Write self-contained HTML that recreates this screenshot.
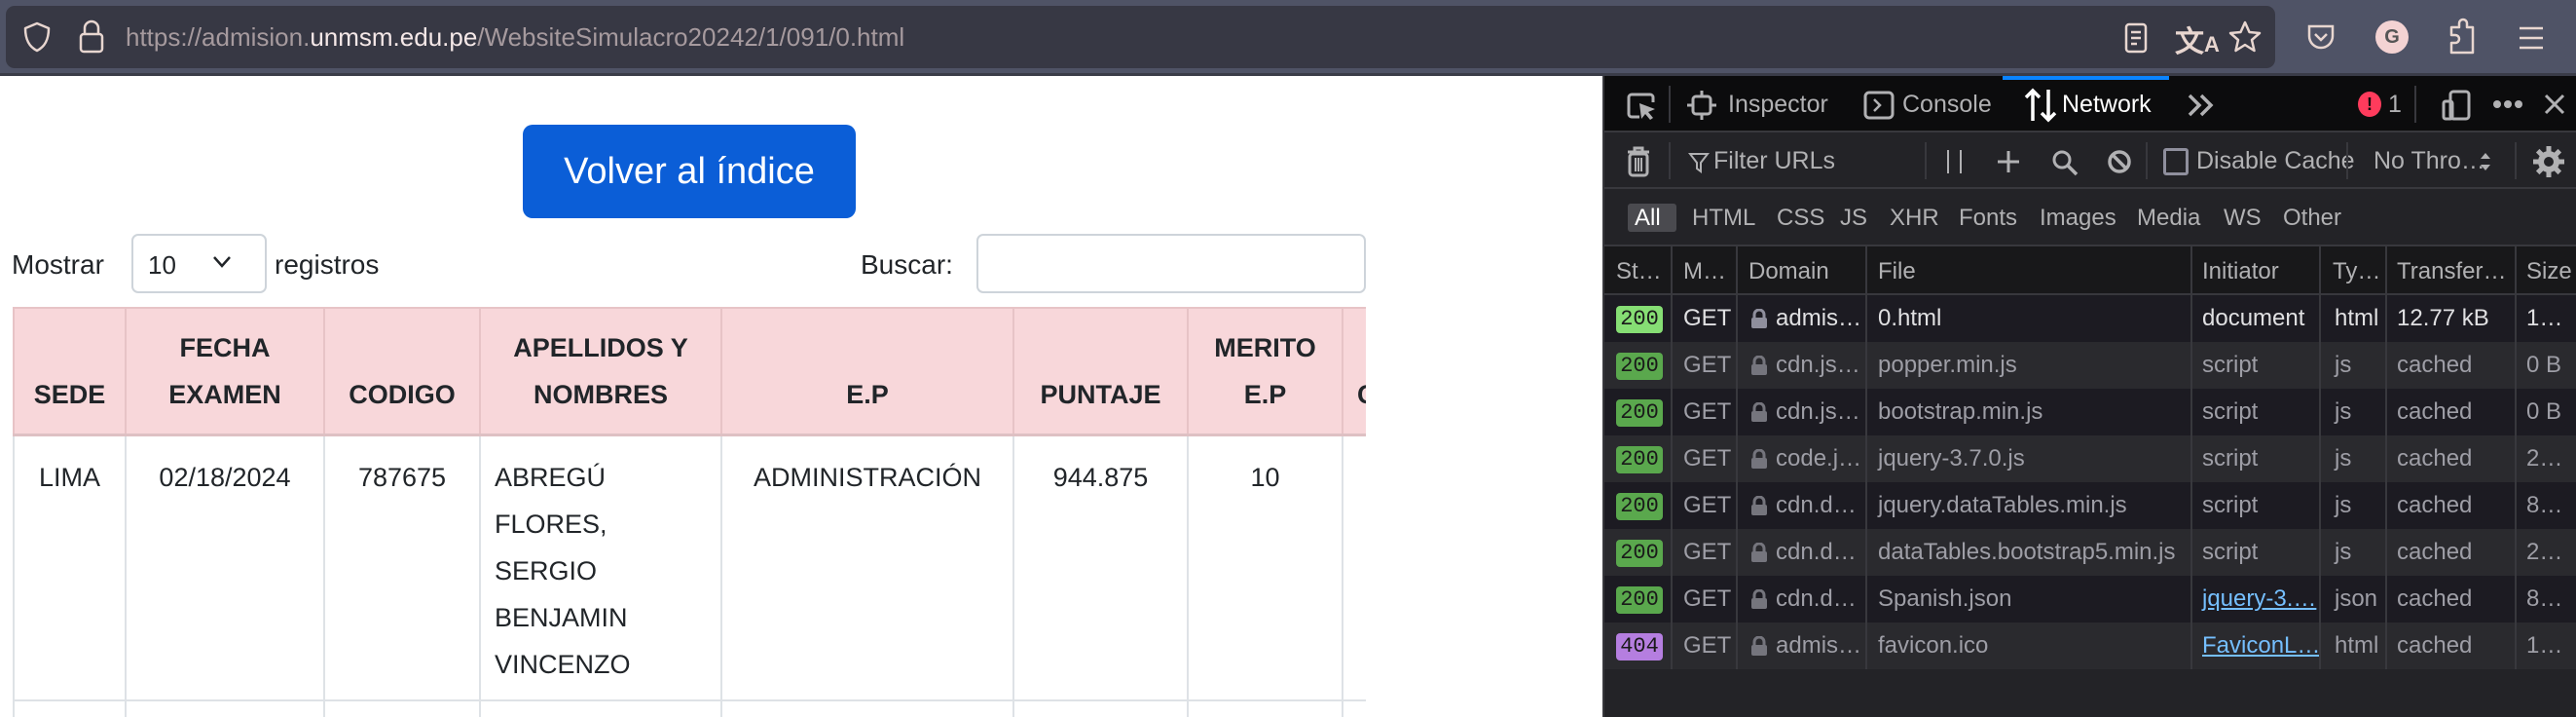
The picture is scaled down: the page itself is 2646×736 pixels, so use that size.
<!DOCTYPE html>
<html><head><meta charset="utf-8"><style>
*{margin:0;padding:0;box-sizing:border-box}
html,body{overflow:hidden}
body{width:2646px;height:736px;position:relative;background:#fff;font-family:"Liberation Sans",sans-serif}
.a{position:absolute;white-space:nowrap}
#top{left:0;top:0;width:2646px;height:78px;background:#4f5366;border-bottom:3px solid #3a3c48}
#url{left:6px;top:6px;width:2331px;height:64px;background:#373844;border-radius:9px}
.ut{font-size:26px;line-height:64px;color:#a69a9e}
.page{left:0;top:78px;width:1646px;height:658px;background:#fff}
.btn{left:537px;top:128px;width:342px;height:96px;background:#0b5ed7;border-radius:10px;color:#fff;font-size:38px;line-height:96px;text-align:center}
.lab{font-size:28px;color:#212529;line-height:32px}
.box{border:2px solid #ced4da;border-radius:7px;background:#fff}
table{position:absolute;left:0;top:0;border-collapse:collapse;font-size:27px;color:#212529;table-layout:fixed;width:1600px}
th,td{border:2px solid #dee2e6;padding:0 10px;overflow:hidden}
th{background:#f8d7da;border-color:#e7c3c6;height:130px;vertical-align:bottom;padding-bottom:16px;line-height:48px;font-weight:bold;text-align:center;border-bottom:3px solid #dec0c3}
td{vertical-align:top;line-height:48px;padding-top:18px;height:273px;text-align:center}
#dt{left:1646px;top:78px;width:1000px;height:658px;background:#232327;border-left:2px solid #38383d;color:#b1b1b3;font-size:23px;overflow:hidden}
.r1{left:0;top:0;width:1000px;height:58px;background:#0c0c0d;border-bottom:2px solid #38383d}
.r2{left:0;top:58px;width:1000px;height:58px;background:#232327;border-bottom:2px solid #38383d}
.r3{left:0;top:116px;width:1000px;height:59px;background:#232327;border-bottom:2px solid #38383d}
.hd{left:0;top:175px;width:1000px;height:50px;background:#18181a;border-bottom:2px solid #38383d}
.sep{position:absolute;width:2px;background:#38383d}
.row{position:absolute;left:0;width:1000px;height:48px}
.cell{position:absolute;line-height:48px;top:0;font-size:24px}
.bdg{position:absolute;left:12px;top:11px;width:48px;height:28px;border-radius:4px;font-family:"Liberation Mono",monospace;font-size:22px;line-height:28px;text-align:center;color:#1a1a1a}
.lk{position:absolute;left:150px;top:14px;width:18px;height:20px}
.lnk{color:#75bfff;text-decoration:underline}
.t{font-size:25px}
</style></head><body>
<div id="top" class="a"></div>
<div id="url" class="a"></div>
<svg class="a" style="left:22px;top:21px" width="32" height="34" viewBox="0 0 32 34"><path d="M16 3 L28 8 C28 20 24 27 16 31 C8 27 4 20 4 8 Z" fill="none" stroke="#e8d6d0" stroke-width="2.5" stroke-linejoin="round"/></svg>
<svg class="a" style="left:80px;top:20px" width="28" height="36" viewBox="0 0 28 36"><path d="M7 15 V9 a7 7 0 0 1 14 0 V15" fill="none" stroke="#e8d6d0" stroke-width="2.5"/><rect x="3" y="15" width="22" height="18" rx="3" fill="none" stroke="#e8d6d0" stroke-width="2.5"/></svg>
<div class="a ut" style="left:129px;top:6px">https://admision.<span style="color:#f5e8e8">unmsm.edu.pe</span>/WebsiteSimulacro20242/1/091/0.html</div>
<svg class="a" style="left:2180px;top:22px" width="28" height="34" viewBox="0 0 28 34"><rect x="4" y="3" width="20" height="28" rx="3" fill="none" stroke="#e8d6d0" stroke-width="2.5"/><path d="M9 11h10M9 17h10M9 23h6" stroke="#e8d6d0" stroke-width="2.5"/></svg>
<div class="a" style="left:2234px;top:18px;font-size:30px;color:#e8d6d0;font-weight:bold">文<span style="font-size:22px">A</span></div>
<svg class="a" style="left:2288px;top:20px" width="36" height="36" viewBox="0 0 36 36"><path d="M18 3 L22.5 13 L33 14 L25 21 L27.5 32 L18 26 L8.5 32 L11 21 L3 14 L13.5 13 Z" fill="none" stroke="#e8d6d0" stroke-width="2.5" stroke-linejoin="round"/></svg>
<svg class="a" style="left:2368px;top:22px" width="32" height="32" viewBox="0 0 32 32"><path d="M4 5 H28 V15 A12 12 0 0 1 4 15 Z" fill="none" stroke="#e8d6d0" stroke-width="2.5"/><path d="M10 13 L16 19 L22 13" fill="none" stroke="#e8d6d0" stroke-width="2.5"/></svg>
<div class="a" style="left:2440px;top:21px;width:34px;height:34px;border-radius:50%;background:#f4d3d3;color:#555;font-weight:bold;font-size:20px;text-align:center;line-height:34px">G</div>
<svg class="a" style="left:2512px;top:18px" width="34" height="40" viewBox="0 0 34 40"><path d="M6 36 V26 h4 a4 4 0 0 0 0-8 H6 V10 h8 V6 a4 4 0 0 1 8 0 V10 h6 V36 Z" fill="none" stroke="#e8d6d0" stroke-width="2.5" stroke-linejoin="round"/></svg>
<svg class="a" style="left:2586px;top:26px" width="28" height="26"><path d="M2 3h24M2 13h24M2 23h24" stroke="#e8d6d0" stroke-width="2.5"/></svg>

<div class="a page"></div>
<div class="a btn">Volver al índice</div>
<div class="a lab" style="left:12px;top:256px">Mostrar</div>
<div class="a box" style="left:135px;top:240px;width:139px;height:61px"></div>
<div class="a lab" style="left:152px;top:256px;font-size:26px">10</div>
<svg class="a" style="left:218px;top:262px" width="20" height="14"><path d="M2 2 L10 11 L18 2" fill="none" stroke="#212529" stroke-width="2.5"/></svg>
<div class="a lab" style="left:282px;top:256px">registros</div>
<div class="a lab" style="left:884px;top:256px">Buscar:</div>
<div class="a box" style="left:1003px;top:240px;width:400px;height:61px"></div>
<div class="a" style="left:13px;top:315px;width:1390px;height:421px;overflow:hidden">
<table>
<colgroup><col style="width:115px"><col style="width:204px"><col style="width:160px"><col style="width:248px"><col style="width:300px"><col style="width:179px"><col style="width:159px"><col style="width:235px"></colgroup>
<tr><th>SEDE</th><th>FECHA<br>EXAMEN</th><th>CODIGO</th><th>APELLIDOS Y<br>NOMBRES</th><th>E.P</th><th>PUNTAJE</th><th>MERITO<br>E.P</th><th style="text-align:left;padding-left:14px">CARRERA</th></tr>
<tr><td>LIMA</td><td>02/18/2024</td><td>787675</td><td style="text-align:left;padding-left:14px">ABREGÚ<br>FLORES,<br>SERGIO<br>BENJAMIN<br>VINCENZO</td><td>ADMINISTRACIÓN</td><td>944.875</td><td>10</td><td></td></tr>
<tr><td></td><td></td><td></td><td></td><td></td><td></td><td></td><td></td></tr>
</table></div>

<div id="dt" class="a">
<div class="a r1"></div><div class="a r2"></div><div class="a r3"></div><div class="a hd"></div>
<div class="a" style="left:409px;top:0;width:171px;height:4px;background:#0a84ff"></div>
<svg class="a" style="left:22px;top:16px" width="34" height="30" viewBox="0 0 34 30"><path d="M14 26 H6 a3 3 0 0 1-3-3 V6 a3 3 0 0 1 3-3 H25 a3 3 0 0 1 3 3 V11" fill="none" stroke="#b1b1b3" stroke-width="3"/><path d="M14 12 L30 18 L23 21 L28 27 L25 29 L20 23 L16 28 Z" fill="#b1b1b3"/></svg>
<div class="sep" style="left:66px;top:10px;height:38px"></div>
<svg class="a" style="left:84px;top:14px" width="32" height="32" viewBox="0 0 32 32"><rect x="7" y="7" width="18" height="18" rx="3" fill="none" stroke="#b1b1b3" stroke-width="3"/><path d="M16 1v6M16 25v6M1 16h6M25 16h6" stroke="#b1b1b3" stroke-width="3"/></svg>
<div class="a t" style="left:127px;top:12px;line-height:34px">Inspector</div>
<svg class="a" style="left:266px;top:15px" width="32" height="30" viewBox="0 0 32 30"><rect x="2" y="2" width="28" height="26" rx="4" fill="none" stroke="#b1b1b3" stroke-width="3"/><path d="M11 9 L17 15 L11 21" fill="none" stroke="#b1b1b3" stroke-width="2.5"/></svg>
<div class="a t" style="left:306px;top:12px;line-height:34px">Console</div>
<svg class="a" style="left:430px;top:12px" width="36" height="36" viewBox="0 0 36 36"><path d="M10 34V3M3 10L10 3L17 10M26 2V33M19 26L26 33L33 26" fill="none" stroke="#fff" stroke-width="3.5"/></svg>
<div class="a t" style="left:470px;top:12px;line-height:34px;color:#fff">Network</div>
<svg class="a" style="left:598px;top:18px" width="30" height="24"><path d="M3 2L13 12L3 22M15 2L25 12L15 22" fill="none" stroke="#b1b1b3" stroke-width="3.5"/></svg>
<div class="a" style="left:774px;top:16px;width:24px;height:26px;border-radius:50%;background:#ff3b5c;color:#0c0c0d;font-weight:bold;font-size:18px;text-align:center;line-height:26px">!</div>
<div class="a t" style="left:805px;top:12px;line-height:34px">1</div>
<div class="sep" style="left:832px;top:10px;height:38px"></div>
<svg class="a" style="left:860px;top:14px" width="30" height="32" viewBox="0 0 30 32"><rect x="9" y="2" width="19" height="28" rx="3" fill="none" stroke="#b1b1b3" stroke-width="3"/><rect x="2" y="12" width="9" height="18" rx="2" fill="none" stroke="#b1b1b3" stroke-width="3"/></svg>
<svg class="a" style="left:912px;top:24px" width="32" height="10"><circle cx="5" cy="5" r="4" fill="#b1b1b3"/><circle cx="16" cy="5" r="4" fill="#b1b1b3"/><circle cx="27" cy="5" r="4" fill="#b1b1b3"/></svg>
<svg class="a" style="left:964px;top:17px" width="24" height="24"><path d="M3 3L21 21M21 3L3 21" stroke="#b1b1b3" stroke-width="3"/></svg>

<svg class="a" style="left:22px;top:72px" width="26" height="32" viewBox="0 0 26 32"><path d="M2 6h22M9 6V2h8v4" fill="none" stroke="#b1b1b3" stroke-width="3"/><rect x="4" y="8" width="18" height="22" rx="3" fill="none" stroke="#b1b1b3" stroke-width="3"/><path d="M10 12v14M13 12v14M16 12v14" stroke="#b1b1b3" stroke-width="2"/></svg>
<div class="sep" style="left:66px;top:68px;height:38px"></div>
<svg class="a" style="left:86px;top:78px" width="22" height="22"><path d="M2 2H20L13 11V20L9 17V11Z" fill="none" stroke="#b1b1b3" stroke-width="2"/></svg>
<div class="a t" style="left:112px;top:70px;line-height:34px">Filter URLs</div>
<div class="sep" style="left:329px;top:68px;height:38px"></div>
<div class="a" style="left:352px;top:76px;width:2px;height:24px;background:#b1b1b3"></div>
<div class="a" style="left:365px;top:76px;width:2px;height:24px;background:#b1b1b3"></div>
<svg class="a" style="left:403px;top:76px" width="24" height="24"><path d="M12 1V23M1 12H23" stroke="#b1b1b3" stroke-width="3"/></svg>
<svg class="a" style="left:459px;top:75px" width="28" height="28"><circle cx="11" cy="11" r="8" fill="none" stroke="#b1b1b3" stroke-width="3"/><path d="M17 17L26 26" stroke="#b1b1b3" stroke-width="3.5"/></svg>
<svg class="a" style="left:516px;top:75px" width="26" height="26"><circle cx="13" cy="13" r="10" fill="none" stroke="#b1b1b3" stroke-width="3.5"/><path d="M6 6L20 20" stroke="#b1b1b3" stroke-width="3.5"/></svg>
<div class="sep" style="left:556px;top:68px;height:38px"></div>
<div class="a" style="left:574px;top:74px;width:26px;height:28px;border:3px solid #8f8f9d;border-radius:3px"></div>
<div class="a t" style="left:608px;top:70px;line-height:34px">Disable Cache</div>
<div class="sep" style="left:762px;top:68px;height:38px"></div>
<div class="a t" style="left:790px;top:70px;line-height:34px">No Thro…</div>
<svg class="a" style="left:898px;top:76px" width="14" height="24"><path d="M2 9L7 3L12 9ZM2 15L7 21L12 15Z" fill="#b1b1b3"/></svg>
<div class="sep" style="left:935px;top:68px;height:38px"></div>
<svg class="a" style="left:952px;top:70px" width="36" height="36" viewBox="0 0 36 36"><g stroke="#b1b1b3" stroke-width="5"><path d="M18 2V34M2 18H34M6.7 6.7L29.3 29.3M29.3 6.7L6.7 29.3"/></g><circle cx="18" cy="18" r="11" fill="#b1b1b3"/><circle cx="18" cy="18" r="5" fill="#232327"/></svg>

<div class="a" style="left:24px;top:131px;width:50px;height:29px;background:#4a4a4f;border-radius:3px"></div>
<div class="a" style="left:0;top:129px;line-height:34px;font-size:24px;width:1000px">
<span class="a" style="left:31px;color:#fff">All</span><span class="a" style="left:90px">HTML</span><span class="a" style="left:177px">CSS</span><span class="a" style="left:242px">JS</span><span class="a" style="left:293px">XHR</span><span class="a" style="left:364px">Fonts</span><span class="a" style="left:447px">Images</span><span class="a" style="left:547px">Media</span><span class="a" style="left:636px">WS</span><span class="a" style="left:697px">Other</span></div>

<div class="a" style="left:0;top:176px;line-height:50px;font-size:24px;width:1000px">
<span class="a" style="left:12px">St…</span><span class="a" style="left:81px">M…</span><span class="a" style="left:148px">Domain</span><span class="a" style="left:281px">File</span><span class="a" style="left:614px">Initiator</span><span class="a" style="left:748px">Ty…</span><span class="a" style="left:814px">Transfer…</span><span class="a" style="left:947px">Size</span></div>

<div class="row" style="top:225px;background:#1c1b22;color:#e0e0e2"><div class="bdg" style="background:#86de74">200</div><span class="cell" style="left:81px">GET</span><svg class="lk" viewBox="0 0 18 20"><path d="M4 9V6a5 5 0 0 1 10 0V9" fill="none" stroke="#8f8f9d" stroke-width="3"/><rect x="1" y="9" width="16" height="11" rx="2" fill="#8f8f9d"/></svg><span class="cell" style="left:176px">admis…</span><span class="cell" style="left:281px">0.html</span><span class="cell" style="left:614px">document</span><span class="cell" style="left:750px">html</span><span class="cell" style="left:814px">12.77 kB</span><span class="cell" style="left:947px">1…</span></div>
<div class="row" style="top:273px;background:#2a2a2e;color:#9e9ea6"><div class="bdg" style="background:#5aa84d">200</div><span class="cell" style="left:81px">GET</span><svg class="lk" viewBox="0 0 18 20"><path d="M4 9V6a5 5 0 0 1 10 0V9" fill="none" stroke="#75757d" stroke-width="3"/><rect x="1" y="9" width="16" height="11" rx="2" fill="#75757d"/></svg><span class="cell" style="left:176px">cdn.js…</span><span class="cell" style="left:281px">popper.min.js</span><span class="cell" style="left:614px">script</span><span class="cell" style="left:750px">js</span><span class="cell" style="left:814px">cached</span><span class="cell" style="left:947px">0 B</span></div>
<div class="row" style="top:321px;background:#1c1b22;color:#9e9ea6"><div class="bdg" style="background:#5aa84d">200</div><span class="cell" style="left:81px">GET</span><svg class="lk" viewBox="0 0 18 20"><path d="M4 9V6a5 5 0 0 1 10 0V9" fill="none" stroke="#75757d" stroke-width="3"/><rect x="1" y="9" width="16" height="11" rx="2" fill="#75757d"/></svg><span class="cell" style="left:176px">cdn.js…</span><span class="cell" style="left:281px">bootstrap.min.js</span><span class="cell" style="left:614px">script</span><span class="cell" style="left:750px">js</span><span class="cell" style="left:814px">cached</span><span class="cell" style="left:947px">0 B</span></div>
<div class="row" style="top:369px;background:#2a2a2e;color:#9e9ea6"><div class="bdg" style="background:#5aa84d">200</div><span class="cell" style="left:81px">GET</span><svg class="lk" viewBox="0 0 18 20"><path d="M4 9V6a5 5 0 0 1 10 0V9" fill="none" stroke="#75757d" stroke-width="3"/><rect x="1" y="9" width="16" height="11" rx="2" fill="#75757d"/></svg><span class="cell" style="left:176px">code.j…</span><span class="cell" style="left:281px">jquery-3.7.0.js</span><span class="cell" style="left:614px">script</span><span class="cell" style="left:750px">js</span><span class="cell" style="left:814px">cached</span><span class="cell" style="left:947px">2…</span></div>
<div class="row" style="top:417px;background:#1c1b22;color:#9e9ea6"><div class="bdg" style="background:#5aa84d">200</div><span class="cell" style="left:81px">GET</span><svg class="lk" viewBox="0 0 18 20"><path d="M4 9V6a5 5 0 0 1 10 0V9" fill="none" stroke="#75757d" stroke-width="3"/><rect x="1" y="9" width="16" height="11" rx="2" fill="#75757d"/></svg><span class="cell" style="left:176px">cdn.d…</span><span class="cell" style="left:281px">jquery.dataTables.min.js</span><span class="cell" style="left:614px">script</span><span class="cell" style="left:750px">js</span><span class="cell" style="left:814px">cached</span><span class="cell" style="left:947px">8…</span></div>
<div class="row" style="top:465px;background:#2a2a2e;color:#9e9ea6"><div class="bdg" style="background:#5aa84d">200</div><span class="cell" style="left:81px">GET</span><svg class="lk" viewBox="0 0 18 20"><path d="M4 9V6a5 5 0 0 1 10 0V9" fill="none" stroke="#75757d" stroke-width="3"/><rect x="1" y="9" width="16" height="11" rx="2" fill="#75757d"/></svg><span class="cell" style="left:176px">cdn.d…</span><span class="cell" style="left:281px">dataTables.bootstrap5.min.js</span><span class="cell" style="left:614px">script</span><span class="cell" style="left:750px">js</span><span class="cell" style="left:814px">cached</span><span class="cell" style="left:947px">2…</span></div>
<div class="row" style="top:513px;background:#1c1b22;color:#9e9ea6"><div class="bdg" style="background:#5aa84d">200</div><span class="cell" style="left:81px">GET</span><svg class="lk" viewBox="0 0 18 20"><path d="M4 9V6a5 5 0 0 1 10 0V9" fill="none" stroke="#75757d" stroke-width="3"/><rect x="1" y="9" width="16" height="11" rx="2" fill="#75757d"/></svg><span class="cell" style="left:176px">cdn.d…</span><span class="cell" style="left:281px">Spanish.json</span><span class="cell lnk" style="left:614px">jquery-3.…</span><span class="cell" style="left:750px">json</span><span class="cell" style="left:814px">cached</span><span class="cell" style="left:947px">8…</span></div>
<div class="row" style="top:561px;background:#2a2a2e;color:#9e9ea6"><div class="bdg" style="background:#b57ee0">404</div><span class="cell" style="left:81px">GET</span><svg class="lk" viewBox="0 0 18 20"><path d="M4 9V6a5 5 0 0 1 10 0V9" fill="none" stroke="#75757d" stroke-width="3"/><rect x="1" y="9" width="16" height="11" rx="2" fill="#75757d"/></svg><span class="cell" style="left:176px">admis…</span><span class="cell" style="left:281px">favicon.ico</span><span class="cell lnk" style="left:614px">FaviconL…</span><span class="cell" style="left:750px">html</span><span class="cell" style="left:814px">cached</span><span class="cell" style="left:947px">1…</span></div>

<div class="sep" style="left:68px;top:175px;height:434px"></div>
<div class="sep" style="left:135px;top:175px;height:434px"></div>
<div class="sep" style="left:268px;top:175px;height:434px"></div>
<div class="sep" style="left:602px;top:175px;height:434px"></div>
<div class="sep" style="left:734px;top:175px;height:434px"></div>
<div class="sep" style="left:802px;top:175px;height:434px"></div>
<div class="sep" style="left:935px;top:175px;height:434px"></div>
</div>
</body></html>
